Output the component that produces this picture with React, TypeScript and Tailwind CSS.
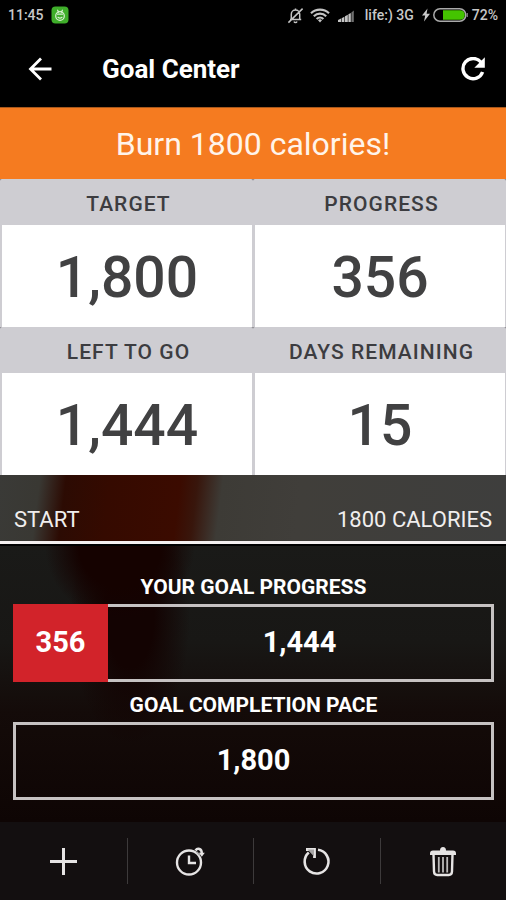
import type { ReactNode } from "react";

const GOAL = 1800;
const DONE = 356;
const LEFT = GOAL - DONE;

const format = (value: number) => value.toLocaleString("en-US");

function StatusBar() {
  return (
    <div className="flex h-[30px] items-center justify-between bg-black px-2 text-sm font-medium text-[#c8c8c8]">
      <div className="flex items-center gap-[7px]">
        <span>11:45</span>
        <svg width="18" height="18" viewBox="0 0 18 18" aria-hidden="true">
          <rect x="0.5" y="0.5" width="17" height="17" rx="4" fill="#3fae2a" />
          <g fill="none" stroke="#d9f0d3" strokeWidth="1.2" strokeLinecap="round">
            <circle cx="9" cy="10" r="4.3" />
            <path d="M6.6 4.2l1 1.9M11.4 4.2l-1 1.9M6.6 8.2h4.8M7 11.3c1.3 1.2 2.7 1.2 4 0" />
          </g>
        </svg>
      </div>
      <div className="flex items-center">
        <svg className="mr-[6px]" width="17" height="17" viewBox="0 0 17 17" fill="none" stroke="#c4c4c4" strokeWidth="1.5" aria-hidden="true">
          <path d="M3 12.6h11.2M4.3 12.4V7.2a4.2 4.2 0 0 1 8.4 0v5.2M8.5 1.4v1.8M7 14.4a1.6 1.6 0 0 0 3 0M1.4 15.6L15.6 1.600" />
        </svg>
        <svg className="mr-2" width="20" height="15" viewBox="0 0 20 15" fill="none" stroke="#c4c4c4" strokeWidth="2.200" aria-hidden="true">
          <path d="M1 5.3a13 13 0 0 1 18 0M3.8 8.2a9 9 0 0 1 12.4 0M6.6 11a5 5 0 0 1 6.8 0" />
          <path d="M8 12.2L10 14.4l2-2.2a3 3 0 0 0-4 0z" fill="#c4c4c4" stroke="none" />
        </svg>
        <svg className="mr-[10px]" width="17" height="13" viewBox="0 0 17 13" fill="#c4c4c4" aria-hidden="true">
          <path d="M0 13v-2l3-1.500V13zM3.600 13V9.200l2.800-1.500V13zM7 13V7.300l2.800-1.600V13zM10.400 13V5.300l2.400-1.400V13z" />
          <path d="M13.400 13V3.500L15.800 1.500V13z" fill="#707070" />
        </svg>
        <span className="mr-2">life:) 3G</span>
        <svg className="mr-[3px]" width="8" height="14" viewBox="0 0 8 14" fill="#c8c8c8" aria-hidden="true">
          <path d="M5.500 0.500L0 7.600h3.200L2 13.500L8 5.800H4.600z" />
        </svg>
        <svg className="mr-1" width="35" height="14" viewBox="0 0 35 14" aria-hidden="true">
          <rect x="0.8" y="0.8" width="32" height="12.400" rx="6.200" fill="#000" stroke="#a9a9a9" strokeWidth="1.500" />
          <path d="M10 2.200h17a4.800 4.800 0 0 1 0 9.600H10z" fill="#44c400" />
          <path d="M34.200 5v4" stroke="#a9a9a9" />
        </svg>
        <span>72%</span>
      </div>
    </div>
  );
}

function Header() {
  return (
    <header className="flex h-[77px] items-center bg-black px-[18px] text-white">
      <button type="button" aria-label="Back" className="flex size-11 items-center justify-center">
        <svg width="24" height="24" viewBox="0 0 24 24" fill="none" stroke="currentColor" strokeWidth="2.800">
          <path d="M23.500 12H2.500M13 1.500L2.500 12L13 22.500" />
        </svg>
      </button>
      <h1 className="ml-10 flex-1 pt-0.5 text-[26px] font-bold">Goal Center</h1>
      <button type="button" aria-label="Refresh" className="-mr-[7px] flex size-11 items-center justify-center">
        <svg width="24" height="24" viewBox="0 0 24 24" fill="none" stroke="currentColor" strokeWidth="3.400">
          <path d="M20 5.300A10.100 10.100 0 1 0 21.600 15" />
          <path d="M23.800 0.300V10.800H13.300z" fill="currentColor" stroke="none" />
        </svg>
      </button>
    </header>
  );
}

function StatCard({ label, value }: { label: string; value: string }) {
  return (
    <div className="flex flex-col">
      <dt className="flex h-[46px] items-center justify-center rounded-t-xs bg-[#cecdd2] pt-1.5 pl-1 text-[21px] font-medium tracking-wider text-[#3c3c40]">
        {label}
      </dt>
      <dd className="flex h-[102px] items-center justify-center border-r border-l-2 border-[#cecdd2] bg-white pt-1 text-[57px] font-medium text-[#414142]">
        {value}
      </dd>
    </div>
  );
}

function ProgressRow({ title, done, rest }: { title: string; done: number; rest: number }) {
  return (
    <section>
      <h2 className="flex h-10 items-center justify-center pt-2 text-[21px] font-bold">{title}</h2>
      <div className="flex h-[78px] text-[29px] font-bold">
        {done > 0 && (
          <div
            className="flex items-center justify-center bg-[#d2232a]"
            style={{ width: `${(done / GOAL) * 100}%` }}
          >
            {format(done)}
          </div>
        )}
        <div
          className={`flex flex-1 items-center justify-center border-[3px] border-[#c6c2c2] ${done > 0 ? "border-l-0" : ""}`}
        >
          {format(rest)}
        </div>
      </div>
    </section>
  );
}

function ToolButton({ label, children }: { label: string; children: ReactNode }) {
  return (
    <button type="button" aria-label={label} className="flex h-[46px] items-center justify-center border-l border-[#3d3a3b] first:border-transparent">
      <svg width="32" height="32" viewBox="0 0 32 32" fill="none" stroke="#e6e4e4" strokeWidth="2">
        {children}
      </svg>
    </button>
  );
}

function Toolbar() {
  return (
    <nav className="grid h-[78px] grid-cols-4 items-center bg-[#130f10]">
      <ToolButton label="Add">
        <path d="M15.500 3v27M2 16.500h27" strokeWidth="3" />
      </ToolButton>
      <ToolButton label="Schedule">
        <circle cx="15" cy="17.500" r="12" strokeWidth="2.400" />
        <path d="M15 10.500v7.500H22" strokeWidth="2.400" />
        <path d="M21.500 5.500C23.500 2.500 28 3.500 27.800 8.500" strokeWidth="2.400" />
        <path d="M24.800 7.800h6l-3 4z" fill="#e6e4e4" stroke="none" />
        <path d="M22.500 6.800l3.500 3.500" stroke="#a8a6a6" strokeWidth="1.600" />
      </ToolButton>
      <ToolButton label="Restart">
        <path d="M17 4.800A11.900 11.900 0 1 1 7.800 7.600" strokeWidth="2.600" />
        <path d="M5 4.500H13.500V13" strokeWidth="2.800" />
        <path d="M6.500 4.500l6.500 7V4.500z" fill="#a8a6a6" stroke="none" />
      </ToolButton>
      <ToolButton label="Delete">
        <path d="M3 10V8.500q0-3 3-3h7q0-3.500 3-3.500t3 3.500h7q3 0 3 3V10z" fill="#e6e4e4" stroke="none" />
        <path d="M6.500 9l0.500 17.500q0.200 3.500 3.200 3.500h11.600q3 0 3.200-3.500L25.500 9" strokeWidth="2.400" />
        <path d="M11.800 12V27.500M16 12V27.500M20.200 12V27.500" stroke="#bcbaba" strokeWidth="1.800" />
      </ToolButton>
    </nav>
  );
}

export default function App() {
  return (
    <div className="flex min-h-screen flex-col bg-black font-['Roboto',sans-serif] text-white">
      <StatusBar />
      <Header />
      <main className="flex flex-1 flex-col">
        <div className="flex h-[72px] items-center justify-center border-t border-[#a8581c] bg-[#f57b20] text-[32px] text-[#fff4ea]">
          Burn 1800 calories!
        </div>
        <dl className="grid grid-cols-2 bg-[#77777a]">
          <StatCard label="TARGET" value={format(GOAL)} />
          <StatCard label="PROGRESS" value={format(DONE)} />
          <StatCard label="LEFT TO GO" value={format(LEFT)} />
          <StatCard label="DAYS REMAINING" value="15" />
        </dl>
        <div className="flex h-[66px] items-end justify-between bg-[linear-gradient(97deg,#3a3a37_0px,#393833_40px,#2c0b03_66px,#350a00_110px,#3b0b00_180px,#38160c_197px,#3d3b36_222px,#403e3a_300px,#3e3e3d_100%)] px-[14px] pb-[5px] text-[22px] text-[#f0eeee]">
          <span>START</span>
          <span>{GOAL} CALORIES</span>
        </div>
        <div className="h-[5px] border-b-2 border-black bg-[#f4f0f0]" />
        <div className="flex flex-1 flex-col bg-[radial-gradient(ellipse_75px_75px_at_120px_0px,#150200_0%,#150200_55%,transparent_100%),radial-gradient(ellipse_60px_130px_at_130px_70px,#130302_0%,#130302_40%,transparent_100%),linear-gradient(180deg,#1a1a18_0%,#181715_35%,#140b09_60%,#0e0504_100%)] pt-[18px] pr-3 pl-[13px]">
          <ProgressRow title="YOUR GOAL PROGRESS" done={DONE} rest={LEFT} />
          <ProgressRow title="GOAL COMPLETION PACE" done={0} rest={GOAL} />
        </div>
      </main>
      <Toolbar />
    </div>
  );
}
